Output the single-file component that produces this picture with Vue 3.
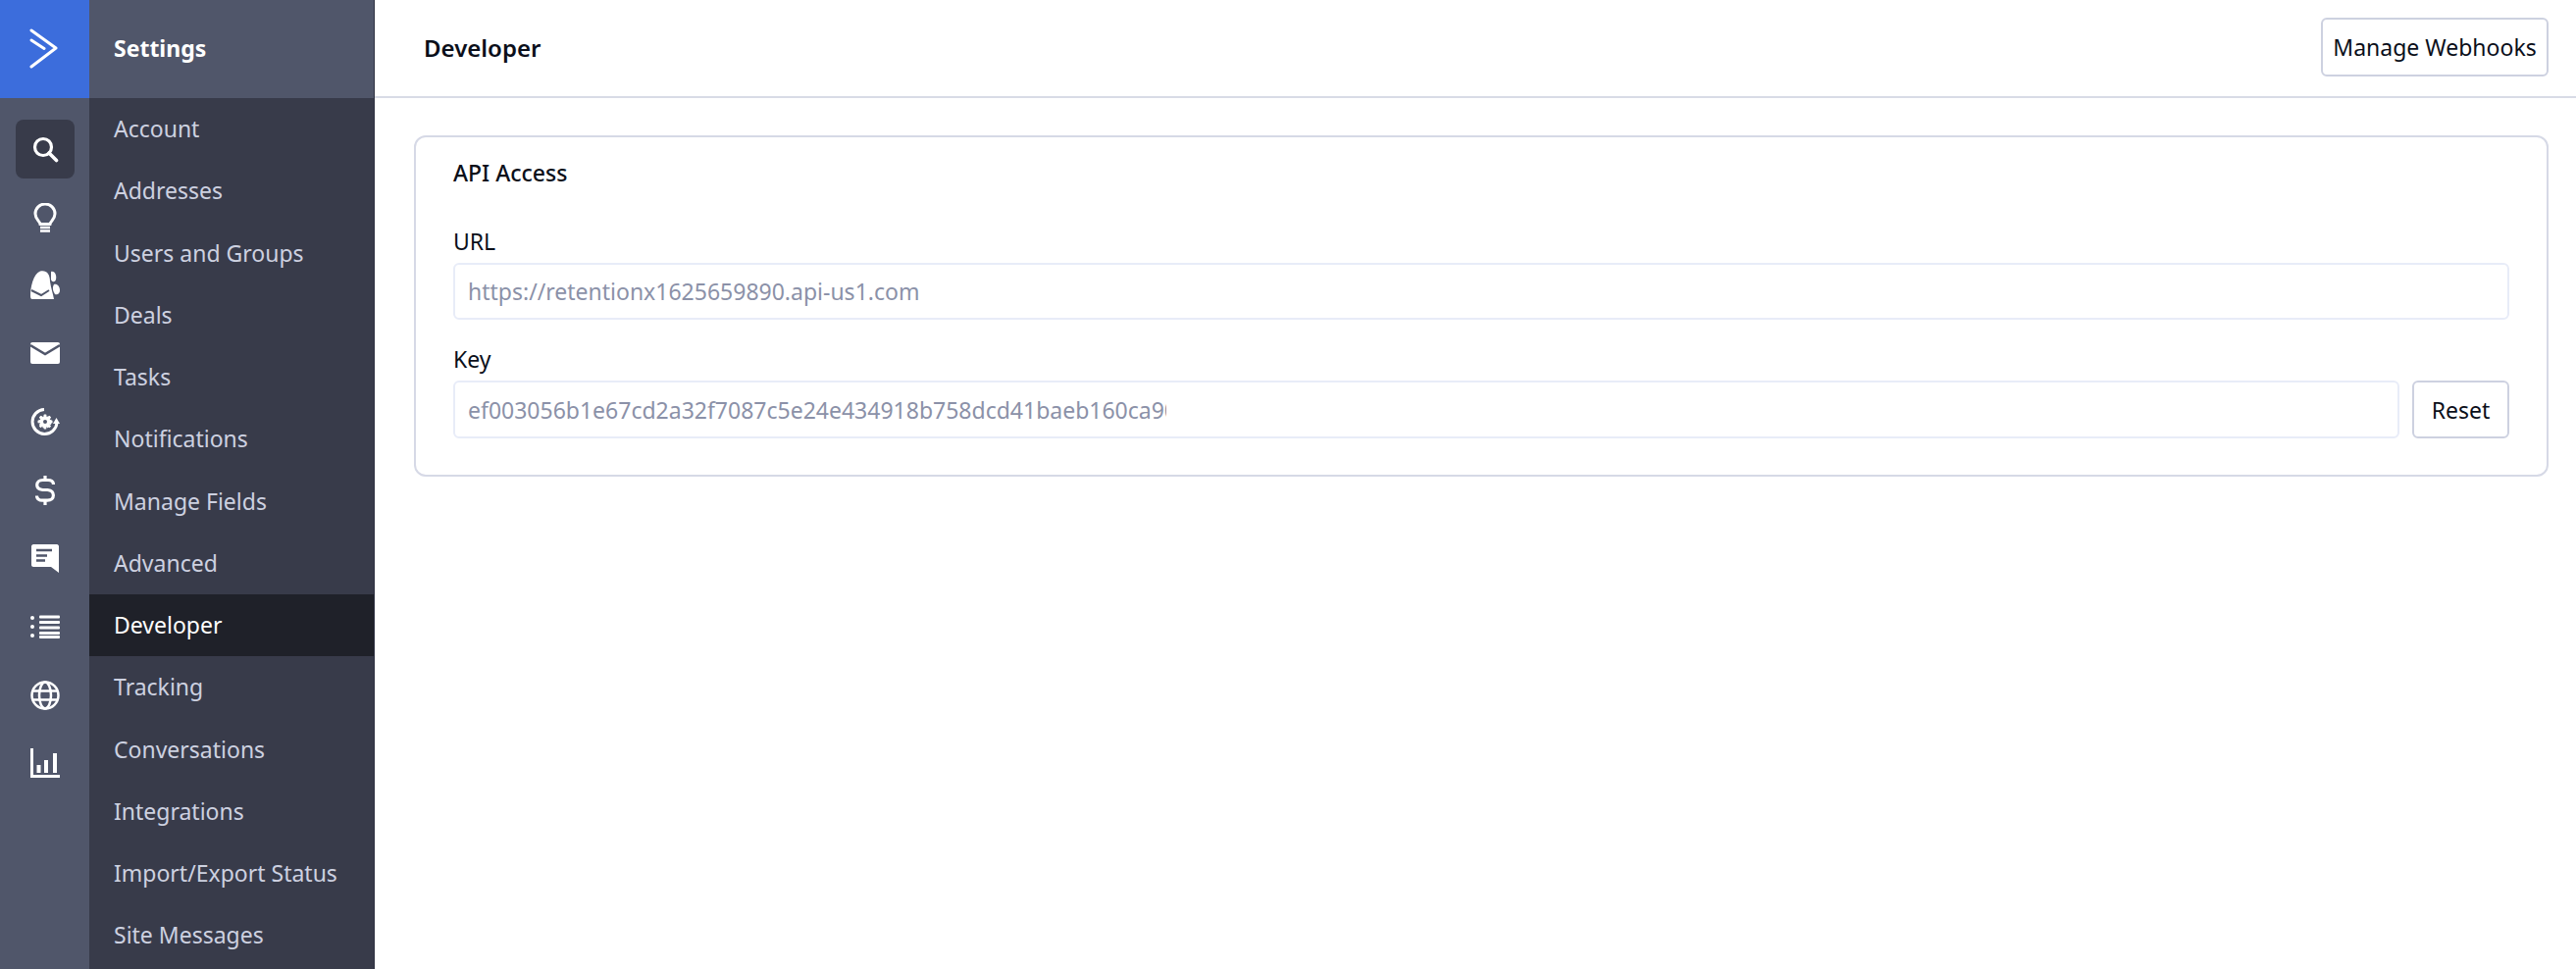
<script setup>
const navItems = ['Account','Addresses','Users and Groups','Deals','Tasks','Notifications','Manage Fields','Advanced','Developer','Tracking','Conversations','Integrations','Import/Export Status','Site Messages']
</script>

<template>
  <div class="app">
    <aside class="rail">
      <div class="logo">
        <svg width="30" height="42" viewBox="0 0 30 42" fill="none" stroke="#fff" stroke-linecap="round" stroke-linejoin="round">
          <path d="M2 2 L27 20 L2 39" stroke-width="3"/>
          <path d="M2 12 L15 20.5" stroke-width="3"/>
        </svg>
      </div>
      <div class="rail-icons">
        <div class="rail-btn active">
          <svg width="28" height="28" viewBox="0 0 28 28" fill="none" stroke="#fff"><circle cx="12" cy="12" r="8.5" stroke-width="3.2"/><path d="M18 18 L25.5 25.5" stroke-width="3.6" stroke-linecap="round"/></svg>
        </div>
        <div class="rail-btn">
          <svg width="24" height="30" viewBox="0 0 24 30" fill="none" stroke="#fff"><path d="M7 21.5 C6.5 18.5 2 16.5 2 11 A10 10 0 0 1 22 11 C22 16.5 17.5 18.5 17 21.5 Z" stroke-width="3"/><path d="M7 25 H17 M7 28.5 H17" stroke-width="2.4"/></svg>
        </div>
        <div class="rail-btn">
          <svg width="32" height="32" viewBox="0 0 32 32" fill="#fff"><path d="M1 26 C1 18 4 4 11 1.5 C17 0 21 4 21 12 C22 19 24 24 25 30 H3 C1 30 1 28 1 26 Z"/><path d="M22 2 C26 1 28 6 27 10 C26 13 23 13 22 10 Z"/><path d="M25 15 C28 14 31 17 31 21 C31 24 29 26 26 25 C24 22 23 18 25 15 Z"/><path d="M2 21 L12 26 L20 21" stroke="#50566a" stroke-width="2" fill="none"/></svg>
        </div>
        <div class="rail-btn">
          <svg width="30" height="23" viewBox="0 0 30 23"><rect width="30" height="22" rx="2" fill="#fff"/><path d="M0 3 L15 12 L30 3" fill="none" stroke="#50566a" stroke-width="2.4"/></svg>
        </div>
        <div class="rail-btn">
          <svg width="30" height="30" viewBox="0 0 30 30" fill="none"><path d="M14 2.5 A12.5 12.5 0 1 0 27 16" stroke="#fff" stroke-width="3"/><path d="M23 17 L26.5 11 L30 17 Z" fill="#fff"/><circle cx="15" cy="15" r="5" stroke="#fff" stroke-width="3.4" stroke-dasharray="2.6 1"/><circle cx="15" cy="15" r="5.5" fill="#fff"/><circle cx="15" cy="15" r="2" fill="#50566a"/><path d="M15 7.5 V22.5 M7.5 15 H22.5 M9.7 9.7 L20.3 20.3 M20.3 9.7 L9.7 20.3" stroke="#fff" stroke-width="2.4" stroke-dasharray="2.5 10 2.5"/></svg>
        </div>
        <div class="rail-btn">
          <svg width="20" height="30" viewBox="0 0 20 30" fill="none" stroke="#fff" stroke-width="3.2"><path d="M18.5 9 C18.5 6 16 4.5 13 4.5 H7.5 C4 4.5 1.7 6.5 1.7 9.5 C1.7 12.8 4 14 7.5 14.5 H12.5 C16 15 18.4 16.5 18.4 20 C18.4 23.3 16 25.2 12.5 25.2 H7 C4 25.2 1.5 23.5 1.5 20.5"/><path d="M10 0 V4 M10 26 V30"/></svg>
        </div>
        <div class="rail-btn">
          <svg width="28" height="29" viewBox="0 0 28 29"><path d="M2 0 H26 C27 0 28 1 28 2 V29 L20 23 H2 C1 23 0 22 0 21 V2 C0 1 1 0 2 0 Z" fill="#fff"/><path d="M5 6 H21 M5 11.5 H16 M5 16.5 H14" stroke="#50566a" stroke-width="2.6"/></svg>
        </div>
        <div class="rail-btn">
          <svg width="30" height="24" viewBox="0 0 30 24" fill="#fff"><circle cx="2" cy="3" r="2"/><circle cx="2" cy="12" r="2"/><circle cx="2" cy="21" r="2"/><rect x="9" y="0.5" width="21" height="3" rx="1"/><rect x="9" y="6" width="21" height="3" rx="1"/><rect x="9" y="11.5" width="21" height="3" rx="1"/><rect x="9" y="17" width="21" height="3" rx="1"/><rect x="9" y="21" width="21" height="3" rx="1"/></svg>
        </div>
        <div class="rail-btn">
          <svg width="30" height="30" viewBox="0 0 30 30" fill="none" stroke="#fff" stroke-width="2.5"><circle cx="15" cy="15" r="13.5"/><ellipse cx="15" cy="15" rx="6" ry="13.5"/><path d="M2 10.5 H28 M2 19.5 H28"/></svg>
        </div>
        <div class="rail-btn">
          <svg width="30" height="30" viewBox="0 0 30 30" fill="none" stroke="#fff"><path d="M1.5 0 V28.5 H30" stroke-width="3"/><path d="M8.5 17 V25 M16 12 V25 M25 5 V25" stroke-width="4"/></svg>
        </div>
      </div>
    </aside>

    <nav class="sidebar">
      <div class="sidebar-title">Settings</div>
      <ul class="nav-list">
        <li v-for="item in navItems" :key="item" class="nav-item" :class="{ current: item === 'Developer' }">{{ item }}</li>
      </ul>
    </nav>

    <main class="main">
      <header class="topbar">
        <h1 class="page-title">Developer</h1>
        <button class="btn btn-top">Manage Webhooks</button>
      </header>
      <section class="content">
        <div class="card">
          <h2 class="card-title">API Access</h2>
          <label class="label label-url">URL</label>
          <div class="input input-url">https://retentionx1625659890.api-us1.com</div>
          <label class="label label-key">Key</label>
          <div class="key-row">
            <div class="input input-key"><span class="clip">ef003056b1e67cd2a32f7087c5e24e434918b758dcd41baeb160ca90f</span></div>
            <button class="btn btn-reset">Reset</button>
          </div>
        </div>
      </section>
    </main>
  </div>
</template>

<style>
html, body { margin: 0; background: #fff; overflow: hidden; }
</style>

<style scoped>
.app {
  display: flex;
  width: 2626px;
  height: 988px;
  overflow: hidden;
  font-family: "Noto Sans", "Open Sans", sans-serif;
  font-size: 23px;
  color: #0b0f1a;
}
.rail {
  width: 91px;
  flex: none;
  background: #50566a;
}
.logo {
  height: 100px;
  background: #3c6ddc;
  display: flex;
  align-items: center;
  justify-content: center;
}
.logo svg { margin-left: -1px; margin-top: -1px; }
.rail-icons {
  display: flex;
  flex-direction: column;
  align-items: center;
  padding-top: 22px;
  gap: 9.6px;
}
.rail-btn {
  width: 60px;
  height: 60px;
  border-radius: 8px;
  display: flex;
  align-items: center;
  justify-content: center;
}
.rail-btn.active { background: #383b4a; }
.sidebar {
  width: 290px;
  flex: none;
  background: #383b4a;
  border-right: 1px solid #2d3040;
  box-sizing: border-box;
  width: 291px;
}
.sidebar-title {
  height: 100px;
  line-height: 98px;
  background: #50566a;
  padding-left: 25px;
  color: #fff;
  font-weight: 700;
}
.nav-list {
  list-style: none;
  margin: 0;
  padding: 0;
}
.nav-item {
  height: 63.25px;
  line-height: 62px;
  padding-left: 25px;
  color: #cdd1e0;
}
.nav-item.current {
  background: #1f2129;
  color: #fff;
}
.main {
  flex: 1;
  min-width: 0;
}
.topbar {
  height: 100px;
  box-sizing: border-box;
  border-bottom: 2px solid #d8dbe6;
  display: flex;
  align-items: center;
  justify-content: space-between;
  padding: 0 28px 2px 50px;
}
.page-title {
  margin: 0;
  font-size: 24px;
  font-weight: 600;
}
.btn {
  box-sizing: border-box;
  background: #fff;
  border: 2px solid #cdd1e0;
  border-radius: 6px;
  font: inherit;
  color: #0b0f1a;
  padding: 0;
}
.btn-top { width: 232px; height: 60px; }
.btn-reset { width: 99px; height: 59px; flex: none; }
.content { padding: 38px 28px 0 40px; }
.card {
  box-sizing: border-box;
  height: 348px;
  border: 2px solid #d6d9e6;
  border-radius: 12px;
  padding: 0 38px;
}
.card-title {
  margin: 0;
  padding-top: 20px;
  font-size: 23px;
  font-weight: 500;
  line-height: 32px;
}
.label {
  display: block;
  line-height: 32px;
}
.label-url { margin-top: 38px; }
.label-key { margin-top: 24px; }
.input {
  box-sizing: border-box;
  border: 2px solid #e8ecf8;
  border-radius: 6px;
  color: #8b91a8;
  padding: 0 13px;
  display: flex;
  align-items: center;
  overflow: hidden;
  white-space: nowrap;
}
.input-url { height: 58px; margin-top: 6px; }
.key-row {
  display: flex;
  gap: 13px;
  margin-top: 6px;
}
.input-key { flex: 1; height: 59px; min-width: 0; }
.clip { display: block; width: 712px; overflow: hidden; }
</style>
